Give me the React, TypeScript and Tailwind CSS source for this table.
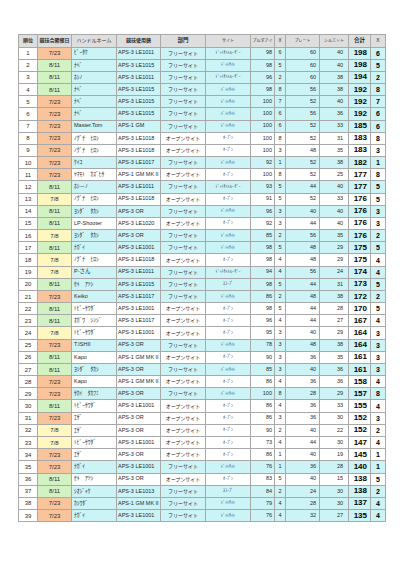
import React from "react";

type Row = [string, string, string, string, string, number, number, number, number, number, number];

// date, handle, gun, division, sight, pull, x, plate, silhouette, total, totalX
const rows: Row[] = [
  ["7/23", "ﾋﾟｰﾀｹ", "APS-3 LE1011", "フリーサイト", "ﾄﾞｯﾄｻｲﾄ/ﾚｰｻﾞｰ", 98, 6, 60, 40, 198, 6],
  ["8/11", "ﾅﾍﾞ", "APS-3 LE1015", "フリーサイト", "ﾄﾞｯﾄｻｲﾄ", 98, 5, 60, 40, 198, 5],
  ["8/11", "ﾎｼﾉ", "APS-3 LE1011", "フリーサイト", "ﾄﾞｯﾄｻｲﾄ/ﾚｰｻﾞｰ", 96, 2, 60, 38, 194, 2],
  ["8/11", "ﾅﾍﾞ", "APS-3 LE1015", "フリーサイト", "ﾄﾞｯﾄｻｲﾄ", 98, 8, 56, 38, 192, 8],
  ["7/23", "ﾅﾍﾞ", "APS-3 LE1015", "フリーサイト", "ﾄﾞｯﾄｻｲﾄ", 100, 7, 52, 40, 192, 7],
  ["7/23", "ﾅﾍﾞ", "APS-3 LE1015", "フリーサイト", "ﾄﾞｯﾄｻｲﾄ", 100, 6, 56, 36, 192, 6],
  ["7/23", "Master.Tom", "APS-1 GM", "フリーサイト", "ﾄﾞｯﾄｻｲﾄ", 100, 6, 52, 33, 185, 6],
  ["7/23", "ﾉｸﾞﾁ　ﾋﾛｼ", "APS-3 LE1018", "オープンサイト", "ｵｰﾌﾟﾝ", 100, 8, 52, 31, 183, 8],
  ["7/23", "ﾉｸﾞﾁ　ﾋﾛｼ", "APS-3 LE1018", "オープンサイト", "ｵｰﾌﾟﾝ", 100, 3, 48, 35, 183, 3],
  ["7/23", "ｹｲｺ", "APS-3 LE1017", "フリーサイト", "ﾄﾞｯﾄｻｲﾄ", 92, 1, 52, 38, 182, 1],
  ["7/23", "ﾔﾏﾓﾄ　ｶｽﾞﾋｻ", "APS-1 GM MK II", "オープンサイト", "ｵｰﾌﾟﾝ", 100, 8, 52, 25, 177, 8],
  ["8/11", "ﾎｼ－ﾉ", "APS-3 LE1011", "フリーサイト", "ﾄﾞｯﾄｻｲﾄ/ﾚｰｻﾞｰ", 93, 5, 44, 40, 177, 5],
  ["7/8", "ﾉｸﾞﾁ　ﾋﾛｼ", "APS-3 LE1018", "オープンサイト", "ｵｰﾌﾟﾝ", 91, 5, 52, 33, 176, 5],
  ["8/11", "ﾖｼﾀﾞ　ﾀｶｼ", "APS-3 OR", "フリーサイト", "ﾄﾞｯﾄｻｲﾄ", 96, 3, 40, 40, 176, 3],
  ["8/11", "LP-Shooter", "APS-3 LE1020", "オープンサイト", "ｵｰﾌﾟﾝ", 92, 3, 44, 40, 176, 3],
  ["7/8", "ﾖｼﾀﾞ　ﾀｶｼ", "APS-3 OR", "フリーサイト", "ﾄﾞｯﾄｻｲﾄ", 85, 2, 56, 35, 176, 2],
  ["8/11", "ﾅｶﾞｲ", "APS-3 LE1001", "フリーサイト", "ﾄﾞｯﾄｻｲﾄ", 98, 5, 48, 29, 175, 5],
  ["7/8", "ﾉｸﾞﾁ　ﾋﾛｼ", "APS-3 LE1018", "オープンサイト", "ｵｰﾌﾟﾝ", 98, 4, 48, 29, 175, 4],
  ["7/8", "P-さん", "APS-3 LE1011", "フリーサイト", "ﾄﾞｯﾄｻｲﾄ/ﾚｰｻﾞｰ", 94, 4, 56, 24, 174, 4],
  ["8/11", "ｾｷ　ｱﾂｼ", "APS-3 LE1015", "フリーサイト", "ｽｺｰﾌﾟ", 98, 5, 44, 31, 173, 5],
  ["7/23", "Keiko", "APS-3 LE1017", "フリーサイト", "ﾄﾞｯﾄｻｲﾄ", 86, 2, 48, 38, 172, 2],
  ["8/11", "ﾄﾋﾟｰｻﾜﾀﾞ", "APS-3 LE1001", "オープンサイト", "ｵｰﾌﾟﾝ", 98, 5, 44, 28, 170, 5],
  ["8/11", "ｵｶﾞﾜ　ｼﾝｼﾞ", "APS-3 LE1017", "オープンサイト", "ｵｰﾌﾟﾝ", 96, 4, 44, 27, 167, 4],
  ["7/8", "ﾄﾋﾟｰｻﾜﾀﾞ", "APS-3 LE1001", "オープンサイト", "ｵｰﾌﾟﾝ", 95, 3, 40, 29, 164, 3],
  ["7/23", "T.ISHII", "APS-3 OR", "フリーサイト", "ﾄﾞｯﾄｻｲﾄ", 78, 3, 48, 38, 164, 3],
  ["8/11", "Kapo", "APS-1 GM MK II", "オープンサイト", "ｵｰﾌﾟﾝ", 90, 3, 36, 35, 161, 3],
  ["8/11", "ﾖｼﾀﾞ　ﾀｶｼ", "APS-3 OR", "フリーサイト", "ﾄﾞｯﾄｻｲﾄ", 85, 3, 40, 36, 161, 3],
  ["7/23", "Kapo", "APS-1 GM MK II", "オープンサイト", "ｵｰﾌﾟﾝ", 86, 4, 36, 36, 158, 4],
  ["7/23", "ｻｶｲ　ﾀｶﾌﾐ", "APS-3 OR", "フリーサイト", "ﾄﾞｯﾄｻｲﾄ", 100, 8, 28, 29, 157, 8],
  ["8/11", "ﾄﾋﾟｰｻﾜﾀﾞ", "APS-3 LE1001", "オープンサイト", "ｵｰﾌﾟﾝ", 86, 4, 36, 33, 155, 4],
  ["7/23", "ｴｻﾞ", "APS-3 OR", "オープンサイト", "ｵｰﾌﾟﾝ", 86, 3, 36, 30, 152, 3],
  ["7/8", "ｴｻﾞ", "APS-3 OR", "オープンサイト", "ｵｰﾌﾟﾝ", 90, 2, 40, 22, 152, 2],
  ["7/8", "ﾄﾋﾟｰｻﾜﾀﾞ", "APS-3 LE1001", "オープンサイト", "ｵｰﾌﾟﾝ", 73, 4, 44, 30, 147, 4],
  ["7/23", "ｴｻﾞ", "APS-3 OR", "オープンサイト", "ｵｰﾌﾟﾝ", 86, 1, 40, 19, 145, 1],
  ["7/23", "ﾅｶﾞｲ", "APS-3 LE1001", "フリーサイト", "ﾄﾞｯﾄｻｲﾄ", 76, 1, 36, 28, 140, 1],
  ["8/11", "ｾｷ　ｱﾂｼ", "APS-3 OR", "オープンサイト", "ｵｰﾌﾟﾝ", 83, 5, 40, 15, 138, 5],
  ["8/11", "ｼｵｼﾞｬｹ", "APS-3 LE1013", "フリーサイト", "ｽｺｰﾌﾟ", 84, 2, 24, 30, 138, 2],
  ["7/23", "ｶｼﾜﾀﾞ", "APS-1 GM MK II", "フリーサイト", "ﾄﾞｯﾄｻｲﾄ", 79, 4, 28, 30, 137, 4],
  ["7/23", "ﾅｶﾞｲ", "APS-3 LE1001", "フリーサイト", "ﾄﾞｯﾄｻｲﾄ", 76, 4, 32, 27, 135, 4],
];

const dateBg: Record<string, string> = {
  "7/23": "bg-[#f9c49b]",
  "8/11": "bg-[#d3f2c4]",
  "7/8": "bg-[#fff6c0]",
};

const widths = [19, 34, 45, 44, 45, 45, 24, 11, 34, 29, 22, 15];

const cell = "border border-[#a9a9a9] p-0 leading-none whitespace-nowrap overflow-hidden";

export default function App() {
  return (
    <div
      className="min-h-[566px] w-[400px] bg-white pl-[18px] pt-[34px] text-[#2a2a2a]"
      style={{ fontFamily: "'Liberation Sans','Noto Sans CJK JP',sans-serif" }}
    >
      <table className="w-[367px] table-fixed border-collapse">
        <colgroup>
          {widths.map((w, i) => (
            <col key={i} style={{ width: w }} />
          ))}
        </colgroup>
        <thead>
          <tr className="h-[12.5px] bg-[#dedede] text-center">
            <th className={`${cell} text-[5px] font-bold`}>順位</th>
            <th className={`${cell} text-[5px] font-bold`}>競技会開催日</th>
            <th className={`${cell} text-[5px] font-normal`}>ハンドルネーム</th>
            <th className={`${cell} text-[5px] font-bold`}>競技使用銃</th>
            <th className={`${cell} text-[5.5px] font-bold`}>部門</th>
            <th className={`${cell} text-[4px] font-normal`}>サイト</th>
            <th className={`${cell} text-[4px] font-normal`}>プルダアイ</th>
            <th className={`${cell} text-[4.5px] font-normal`}>X</th>
            <th className={`${cell} text-[4px] font-normal`}>プレート</th>
            <th className={`${cell} text-[4px] font-normal`}>シルエット</th>
            <th className={`${cell} text-[5.5px] font-bold`}>合計</th>
            <th className={`${cell} text-[5px] font-normal`}>X</th>
          </tr>
        </thead>
        <tbody>
          {rows.map((r, i) => {
            const free = r[3] === "フリーサイト";
            const bg = free ? "bg-[#ccf4f7]" : "bg-white";
            return (
              <tr key={i} className="h-[12.18px]">
                <td className={`${cell} bg-white text-center text-[6px]`}>{i + 1}</td>
                <td className={`${cell} ${dateBg[r[0]]} text-center text-[6px]`}>{r[0]}</td>
                <td className={`${cell} ${bg} pl-[2px] text-left text-[5.5px]`}>{r[1]}</td>
                <td className={`${cell} ${bg} pl-[1px] text-left text-[5.5px]`}>{r[2]}</td>
                <td className={`${cell} ${bg} text-center text-[5px]`}>{r[3]}</td>
                <td className={`${cell} ${bg} text-center text-[4px]`}>{r[4]}</td>
                <td className={`${cell} ${bg} pr-[2px] text-right text-[5.5px]`}>{r[5]}</td>
                <td className={`${cell} ${bg} text-center text-[5.5px]`}>{r[6]}</td>
                <td className={`${cell} ${bg} pr-[3px] text-right text-[5.5px]`}>{r[7]}</td>
                <td className={`${cell} ${bg} pr-[5px] text-right text-[5.5px]`}>{r[8]}</td>
                <td className={`${cell} ${bg} pr-[3px] text-right text-[8px] font-bold text-black`}>{r[9]}</td>
                <td className={`${cell} ${bg} text-center text-[7px] font-bold text-black`}>{r[10]}</td>
              </tr>
            );
          })}
        </tbody>
      </table>
    </div>
  );
}
